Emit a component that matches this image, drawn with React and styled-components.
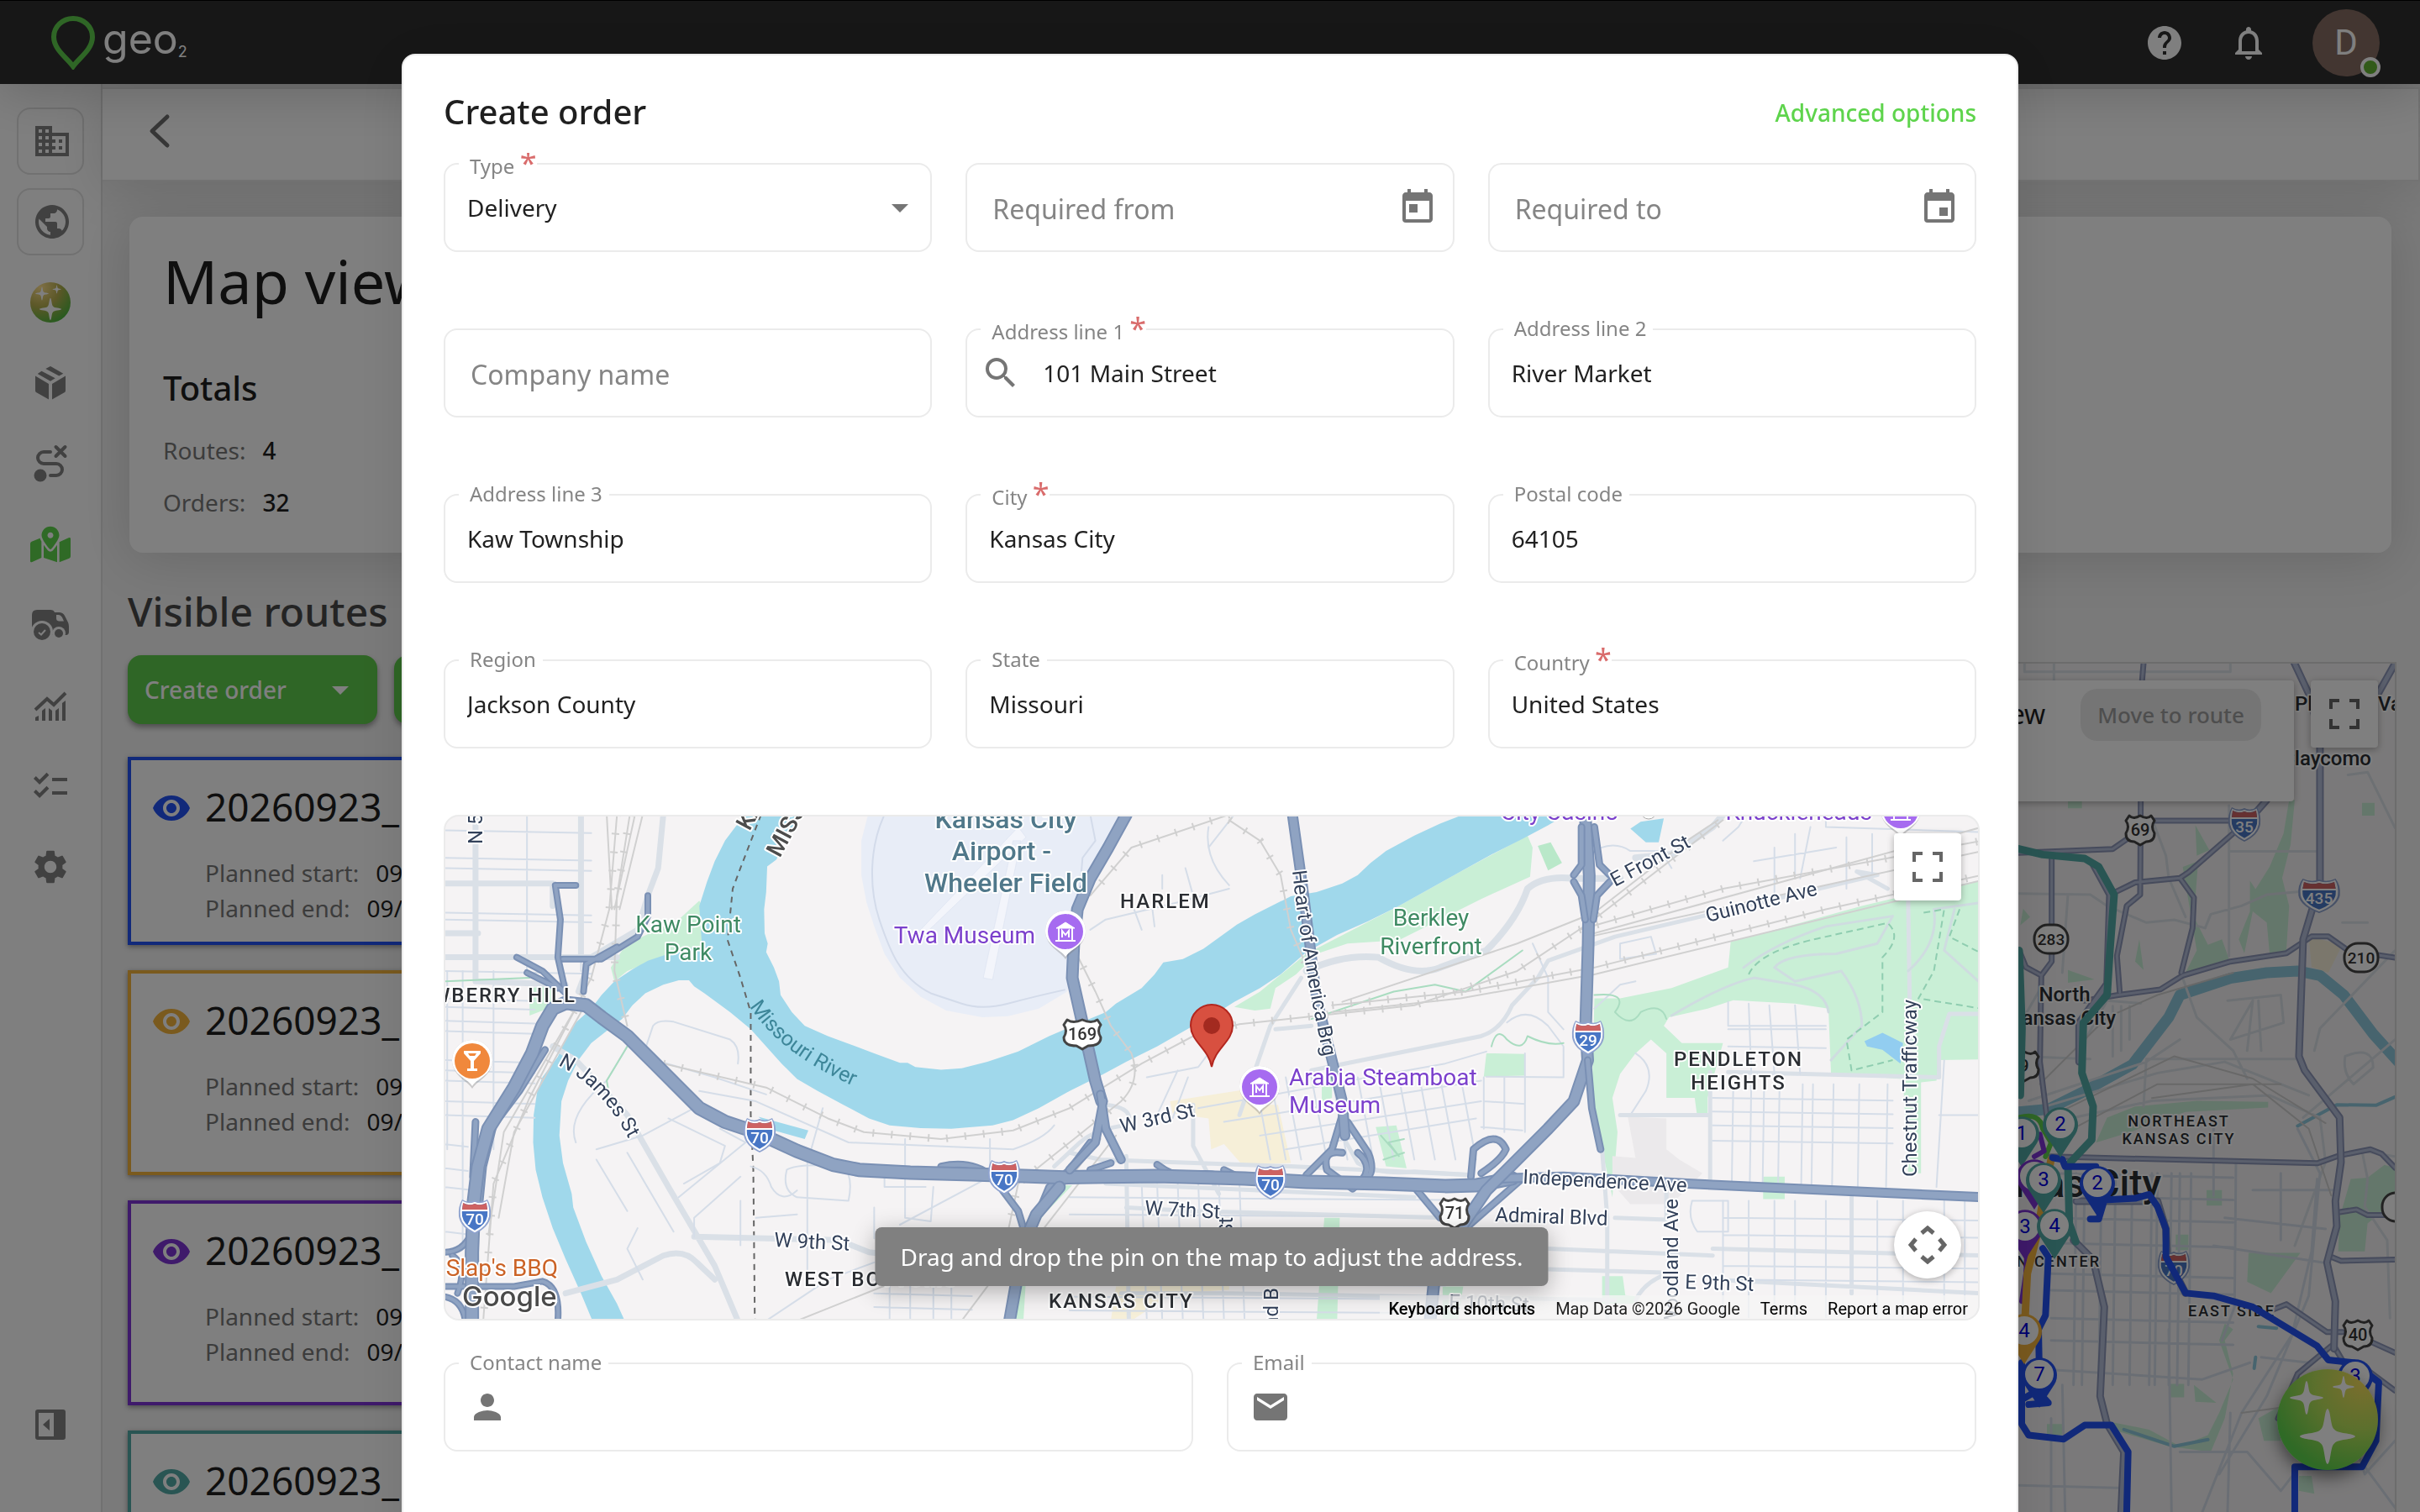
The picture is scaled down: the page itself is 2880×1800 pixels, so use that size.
import React from 'react';
import styled, { createGlobalStyle, css } from 'styled-components';
import {
	MdArrowDropDown, MdBusiness, MdChecklist, MdEvent, MdHelp, MdMail, MdNotificationsNone,
	MdPerson, MdPublic, MdRemoveRedEye, MdSearch, MdSettings, MdToday
} from 'react-icons/md';
import { FaMapMarkedAlt } from 'react-icons/fa';


const GlobalStyle = createGlobalStyle`
	*, *::after {
		box-sizing: border-box;
	}
	body {
		margin: 0;
		overflow: hidden;
		background: #f4f4f4;
		color: #1f1f1f;
		font-family: "Noto Sans", sans-serif;
		font-size: 28px;
	}
	button, input, select {
		font: inherit;
		color: inherit;
	}
	svg {
		display: block;
		flex-shrink: 0;
	}
`

/* ---------- shell ---------- */

const Shell = styled.div`
	display: flex;
	flex-direction: column;
	height: 100vh;
	overflow: hidden;
`
const Header = styled.header`
	display: flex;
	align-items: center;
	flex-shrink: 0;
	gap: 52px;
	height: 100px;
	padding: 0 48px 0 60px;
	border-top: 1px solid #000;
	background: #2e2e2e;
	color: #fff;
	box-shadow: 0 8px 64px rgba(0, 0, 0, 0.2);
	z-index: 1;
`
const Logo = styled.a`
	display: flex;
	align-items: flex-start;
	gap: 8px;
	margin-right: auto;
	color: #fff;
	font-family: Inter, sans-serif;
	font-size: 50px;
	line-height: 54px;
	text-decoration: none;
	sub {
		font-size: 18px;
		line-height: 18px;
		vertical-align: -4px;
	}
`
const Tools = styled.div`
	display: flex;
	gap: 52px;
`
const IconButton = styled.button`
	display: grid;
	place-items: center;
	width: 48px;
	height: 48px;
	padding: 0;
	border: 0;
	background: none;
`
const Avatar = styled.button`
	position: relative;
	width: 80px;
	height: 80px;
	border: 0;
	border-radius: 50%;
	background: #866c62;
	color: #fff;
	font-family: Roboto, sans-serif;
	font-size: 42px;
	&::after {
		content: '';
		position: absolute;
		right: -1px;
		bottom: -1px;
		width: 24px;
		height: 24px;
		border: 4px solid #fff;
		border-radius: 50%;
		background: #64b432;
	}
`
const Body = styled.div`
	display: flex;
	flex: 1;
	min-height: 0;
`
const Sidebar = styled.nav`
	display: flex;
	flex-direction: column;
	align-items: center;
	gap: 16px;
	width: 122px;
	flex-shrink: 0;
	padding: 28px 0 64px;
	border-right: 2px solid #e2e2e2;
	background: #fff;
`
const NavItem = styled.a`
	display: grid;
	place-items: center;
	width: 80px;
	height: 80px;
	border: 2px solid ${p => p.$boxed ? '#e2e2e2' : 'transparent'};
	border-radius: 16px;
	color: ${p => p.$active ? '#5fd44c' : '#828282'};
	${p => p.$boxed && css`padding-left: 4px;`}
	${p => p.$last && css`margin-top: auto;`}
`
const Main = styled.main`
	flex: 1;
	min-width: 0;
`
const Toolbar = styled.div`
	display: flex;
	align-items: center;
	height: 112px;
	margin-top: 4px;
	padding: 0 44px 8px;
	border: 2px solid #e6e6e6;
	border-left: 0;
	background: #fff;
	box-shadow: 0 8px 64px rgba(0, 0, 0, 0.12);
`
const Content = styled.div`
	padding: 42px 28px 0 30px;
`
const Card = styled.section`
	height: 400px;
	margin: 0 6px 38px 2px;
	padding: 27px 40px;
	border-radius: 16px;
	background: #fff;
	box-shadow: 0 8px 64px rgba(0, 0, 0, 0.14);
`
const PageTitle = styled.h1`
	margin: 0 0 52px;
	font-size: 72px;
	font-weight: 400;
	line-height: 98px;
`
const CardTitle = styled.h2`
	margin: 0 0 28px;
	font-size: 40px;
	font-weight: 500;
	line-height: 54px;
`
const Stats = styled.dl`
	display: grid;
	grid-template-columns: max-content 1fr;
	gap: 24px 20px;
	margin: 0;
	line-height: 38px;
`
const Term = styled.dt`
	color: #787878;
`
const Value = styled.dd`
	margin: 0;
	font-weight: ${p => p.$strong ? 500 : 400};
`
const SectionTitle = styled.h2`
	margin: 0 0 20px;
	color: #484848;
	font-size: 48px;
	font-weight: 500;
	line-height: 64px;
`
const Split = styled.div`
	display: grid;
	grid-template-columns: 2fr 3fr;
	gap: 32px;
`
const Actions = styled.div`
	display: flex;
	gap: 20px;
	margin-bottom: 39px;
`
const GreenButton = styled.button`
	display: flex;
	align-items: center;
	justify-content: space-between;
	width: 297px;
	height: 82px;
	padding: 0 20px;
	border: 0;
	border-radius: 16px;
	background: #5fcd4c;
	box-shadow: 0 4px 6px rgba(0, 0, 0, 0.35);
	color: #fff;
	font-weight: 500;
`
const RouteList = styled.div`
	display: flex;
	flex-direction: column;
	gap: 30px;
`
const RouteCard = styled.article`
	display: flex;
	gap: 16px;
	height: ${p => p.$short ? 224 : 244}px;
	padding: 25px 24px;
	border: 4px solid ${p => p.$color};
	background: #fff;
	box-shadow: 0 2px 6px rgba(0, 0, 0, 0.4);
	svg {
		margin-top: 8px;
		color: ${p => p.$color};
	}
`
const RouteName = styled.h3`
	margin: 0 0 28px;
	font-size: 46px;
	font-weight: 400;
	line-height: 60px;
`
const Planned = styled.p`
	display: flex;
	gap: 20px;
	margin: 0;
	line-height: 42px;
	span {
		color: #787878;
	}
`

/* ---------- overview map ---------- */

const OverviewMap = styled.div`
	position: relative;
	height: 1100px;
	margin-top: 8px;
	border: 2px solid #d8d8d8;
	overflow: hidden;
	background: #f5f3f4;
`
const MapFill = styled.svg`
	position: absolute;
	top: 0;
	right: 0;
	width: ${p => p.$width};
	height: 100%;
`
const MapPanel = styled.div`
	position: absolute;
	top: 20px;
	right: 120px;
	display: flex;
	align-items: flex-start;
	justify-content: flex-end;
	gap: 42px;
	width: 900px;
	height: 144px;
	padding: 10px 39px;
	border-radius: 4px;
	background: #fff;
	box-shadow: 0 2px 8px rgba(0, 0, 0, 0.3);
	font-size: 32px;
	line-height: 60px;
`
const MoveButton = styled.button`
	height: 62px;
	padding: 0 20px;
	border: 0;
	border-radius: 20px;
	background: #ebebeb;
	color: #9c9c9c;
	font-size: 26px;
	font-weight: 500;
`
const MapButton = styled.button`
	position: absolute;
	right: 20px;
	display: grid;
	place-items: center;
	width: 80px;
	height: 80px;
	padding: 0;
	border: 0;
	border-radius: ${p => p.$round ? '50%' : '4px'};
	background: #fff;
	box-shadow: 0 2px 8px rgba(0, 0, 0, 0.3);
	${p => p.$round ? css`bottom: 48px;` : css`top: 20px;`}
`
const AssistantButton = styled.button`
	position: fixed;
	right: 50px;
	bottom: 50px;
	padding: 0;
	border: 0;
	border-radius: 50%;
	background: none;
	box-shadow: 0 8px 20px rgba(0, 0, 0, 0.5);
`

/* ---------- dialog ---------- */

const Backdrop = styled.div`
	position: fixed;
	inset: 0;
	z-index: 10;
	display: flex;
	justify-content: center;
	align-items: flex-start;
	padding: 64px 32px 0;
	overflow: hidden;
	background: rgba(0, 0, 0, 0.5);
`
const Dialog = styled.form`
	flex: 0 1 1924px;
	min-height: 100vh;
	padding: 0 48px 64px;
	border: 2px solid #ececec;
	border-radius: 16px;
	background: #fff;
	box-shadow: 0 8px 64px rgba(0, 0, 0, 0.1);
`
const DialogHead = styled.div`
	display: flex;
	align-items: center;
	justify-content: space-between;
	height: 116px;
	padding-top: 18px;
`
const DialogTitle = styled.h2`
	margin: 0;
	font-size: 40px;
	font-weight: 500;
	line-height: 54px;
`
const LinkButton = styled.button`
	padding: 2px 0 0;
	border: 0;
	background: none;
	color: #5ed44c;
	font-weight: 500;
`
const DialogBody = styled.div`
	margin-right: -4px;
	padding: 12px 4px 0 0;
	overflow: hidden;
`
const FieldGrid = styled.div`
	display: grid;
	grid-template-columns: repeat(${p => p.$columns}, 1fr);
	gap: 91px 40px;
`
const FieldBox = styled.div`
	position: relative;
	display: flex;
	align-items: center;
	height: 106px;
	padding-right: ${p => p.$select ? 12 : 18}px;
	border: 2px solid #ebebeb;
	border-radius: 16px;
	color: #757575;
`
const FieldLabel = styled.label`
	position: absolute;
	color: #858585;
	white-space: nowrap;
	${p => p.$resting ? css`
		left: 30px;
		top: 0;
		font-size: 32px;
		line-height: 106px;
	` : css`
		left: 16px;
		top: -18px;
		padding: 0 ${p.$required ? 0 : 8}px 0 13px;
		background: #fff;
		font-size: 24px;
		line-height: 32px;
	`}
`
const Asterisk = styled.span`
	color: #d96c6c;
	font-size: 36px;
`
const control = css`
	flex: 1;
	min-width: 0;
	height: 100%;
	padding: 0 0 0 26px;
	border: 0;
	outline: 0;
	background: none;
	color: #212121;
	appearance: none;
`
const Input = styled.input`
	${control}
`
const Select = styled.select`
	${control}
`
const LeadIcon = styled.span`
	margin-left: ${p => p.$wide ? 26 : 16}px;
`
const AddressMap = styled.div`
	position: relative;
	height: 602px;
	margin: 79px -4px 50px 0;
	border: 2px solid #ebebeb;
	border-radius: 18px;
	overflow: hidden;
	background: #f5f3f4;
`
const MapHint = styled.p`
	position: absolute;
	left: 50%;
	bottom: 39px;
	margin: 0;
	padding: 0 30px;
	border-radius: 8px;
	background: #808080;
	box-shadow: 0 6px 28px rgba(0, 0, 0, 0.3);
	color: #fff;
	font-size: 28px;
	line-height: 70px;
	white-space: nowrap;
	transform: translateX(-50%);
`
const MapCredits = styled.div`
	position: absolute;
	right: 0;
	bottom: 0;
	display: flex;
	gap: 24px;
	padding: 4px 12px 0 10px;
	background: rgba(245, 245, 245, 0.75);
	font-family: Roboto, sans-serif;
	font-size: 20px;
	line-height: 24px;
	a, button {
		padding: 0;
		border: 0;
		background: none;
		color: #000;
		text-decoration: none;
	}
	button {
		font-weight: 500;
	}
`

/* Map strokes are drawn in survey units, so widths are kept in screen pixels. */
const Line = styled.path`
	fill: none;
	stroke: ${p => p.$color || '#d7dee8'};
	stroke-width: ${p => p.$w || 3}px;
	stroke-linejoin: round;
	stroke-linecap: ${p => p.$dash ? 'butt' : 'round'};
	stroke-dasharray: ${p => p.$dash || 'none'};
	vector-effect: non-scaling-stroke;
`
const MapText = styled.text`
	fill: ${p => p.$color || '#33415a'};
	stroke: ${p => p.$halo === false ? 'none' : '#fff'};
	stroke-width: 4px;
	stroke-linejoin: round;
	paint-order: stroke;
	font-family: Roboto, sans-serif;
	font-size: ${p => p.$size || 24}px;
	font-weight: ${p => p.$weight || 400};
	letter-spacing: ${p => p.$caps ? '2px' : 'normal'};
	text-anchor: ${p => p.$anchor || 'start'};
`

const LIGHT = '#dae0e7'
const TINY = '#d5dde8'
const RAIL = '#d0d0d0'
const WATER = '#a0d8eb'
const PARK = '#c9efd6'
const INK = '#2b2e33'
const PURPLE = '#7b40cc'
const GREEN = '#3f8a63'

function Highway({ d, w = 12, edge = '#7a90b4', fill = '#8fa3c2' }) {
	return (
		<>
			<Line d={d} $color={edge} $w={w} />
			<Line d={d} $color={fill} $w={w - 4} />
		</>
	);
}

function Railway({ d }) {
	return (
		<>
			<Line d={d} $color={RAIL} $w={2} />
			<Line d={d} $color={RAIL} $w={9} $dash="2 20" />
		</>
	);
}

function Interstate({ x, y, n, s = 1 }) {
	return (
		<g transform={`translate(${x} ${y})`}>
			<g transform={`scale(${s} 1)`}>
				<path d="M-15 -20 Q-7 -15 0 -19 Q7 -15 15 -20 Q20 -12 19 0 Q17 13 0 21 Q-17 13 -19 0 Q-20 -12 -15 -20Z" fill="#8fa3cf" />
				<path d="M-14 -17 Q-7 -13 0 -16 Q7 -13 14 -17 Q17 -10 16 0 Q14 11 0 18 Q-14 11 -16 0 Q-17 -10 -14 -17Z" fill="#4876c5" stroke="#fff" strokeWidth="2" />
				<path d="M-14 -16 Q-7 -12 0 -15 Q7 -12 14 -16 L15 -8 H-15Z" fill="#cd6262" />
				<path d="M-16 -7H16" stroke="#fff" strokeWidth="2" />
			</g>
			<MapText y="10" $color="#fff" $halo={false} $size={19} $weight={500} $anchor="middle">{n}</MapText>
		</g>
	);
}

function UsRoute({ x, y, n, wide }) {
	const w = wide ? 22 : 17
	return (
		<g transform={`translate(${x} ${y})`}>
			<path
				d={`M${-w + 4} -17 Q${-w / 2} -12 0 -17 Q${w / 2} -12 ${w - 4} -17 L${w} -11 Q${w - 5} -4 ${w} 4 Q${w} 14 7 14 L0 18 L-7 14 Q${-w} 14 ${-w} 4 Q${-w + 5} -4 ${-w} -11Z`}
				fill="#fff" stroke="#444" strokeWidth="3" strokeLinejoin="round"
			/>
			<MapText y="7" $color="#333" $halo={false} $size={20} $weight={500} $anchor="middle">{n}</MapText>
		</g>
	);
}

function StateRoute({ x, y, n }) {
	return (
		<g transform={`translate(${x} ${y})`}>
			<rect x="-20" y="-17" width="40" height="34" rx="16" fill="#fff" stroke="#444" strokeWidth="3" />
			<MapText y="7" $color="#333" $halo={false} $size={19} $weight={500} $anchor="middle">{n}</MapText>
		</g>
	);
}

function Poi({ x, y, color, bar }) {
	return (
		<g transform={`translate(${x} ${y})`}>
			<path d="M0 33 C-5 24 -24 18 -24 -1 A24 24 0 0 1 24 -1 C24 18 5 24 0 33Z" fill="#777" opacity=".35" />
			<path d="M0 30 C-5 21 -24 17 -24 -1 A24 24 0 0 1 24 -1 C24 17 5 21 0 30Z" fill="#fff" />
			<circle r="21" fill={color} />
			{bar
				? <path d="M-10 -12H10V-9L2 0V9H6V12H-6V9H-2V0L-10 -9Z M-5 -9L-3 -6H3L5 -9Z" fill="#fff" fillRule="evenodd" />
				: (
					<g fill="none" stroke="#fff" strokeWidth="3">
						<path d="M-12 11H12M-8 10V-4M8 10V-4M-4 7V-1L0 4L4 -1V7" strokeWidth="2" />
						<path d="M-11 -4L0 -11L11 -4Z" fill="#fff" strokeWidth="1" />
					</g>
				)
			}
		</g>
	);
}

function streets(xs, top, bottom, ys, left, right, lean = 0) {
	return xs.map(x => `M${x} ${top}L${x + lean} ${bottom}`).join('')
		+ ys.map(y => `M${left} ${y}L${right} ${y + 8}`).join('');
}

function AddressDrawing() {
	return (
		<MapFill $width="100%" viewBox="530 972 1824 598" preserveAspectRatio="xMinYMid slice" aria-label="Map of Kansas City">
			<g transform="translate(520 960) scale(.6122 .4082)">
				{/* parks, airfield, districts */}
				<path fill={PARK} d="M510 275L520 300L515 410L450 430L370 480L345 510L338 470L360 420L400 380L470 330ZM180 530L240 520L215 590L180 610ZM1235 1105L1180 1190L1150 1260L1140 1500L1125 1500L1150 1240L1190 1150L1215 1105Z" />
				<path fill={PARK} d="M2120 85L2130 120L2125 205L2030 270L1950 330L1870 390L1770 400L1710 430L1670 490L1630 530L1620 590L1590 595L1550 585L1600 540L1690 430L1870 290L1990 190Z" />
				<path fill="#b9e8c9" d="M2140 115L2165 105L2187 165L2160 187Z" />
				<path fill={PARK} d="M3004 215V738L2920 740L2915 800L2885 805V1070H2860L2850 795L2710 780L2705 590L2640 575L2520 565L2470 590L2395 615L2385 640L2420 690L2500 690L2470 850V905H2450L2445 850H2390V720L2360 680L2330 720L2300 780L2285 850L2295 950L2285 1140L2265 1000L2245 850L2250 560L2300 560L2400 530L2510 470L2515 395L2650 340L2770 290L2870 255Z" />
				<path fill={PARK} d="M2040 720L2115 722V785L2035 788ZM1825 935L1865 930L1885 1055L1845 1050ZM1500 870L1530 865L1545 905L1505 920ZM2578 1080H2620V1145H2578ZM2265 1370H2305L2310 1425L2335 1430L2325 1450H2265ZM1725 1200H1755L1750 1500H1710ZM1955 1400H1995L1985 1500H1955ZM1720 800L1740 790V850L1720 860Z" />
				<path fill="#f6efd8" d="M1425 860L1575 825L1580 870L1635 870L1660 1040L1565 1045L1530 985L1505 1000L1500 910L1430 895ZM1320 1400L1540 1380V1410L1430 1420L1350 1500H1310Z" />
				<path fill="#ebe9eb" d="M2315 905L2390 910V1000L2415 1030L2460 1070L2400 1160H2320L2285 1100V1020L2330 1025Z" />
				<path fill="#e8edf7" d="M838 24L825 100L825 200L835 280L850 350L870 430L900 500L940 555L990 595L1060 615L1110 612L1170 590L1225 540L1240 450L1250 330L1290 180L1340 24Z" />
				<Line $color="#d3dbea" $w={2} d="M870 24C840 120 840 240 860 330S900 500 960 545L1020 575Q1060 595 1110 575T1220 535M1270 24L1280 100L1255 150L1250 240" />
				<path fill="#f3f5fb" stroke="#d8dfef" d="M1130 60L940 360L950 370L1145 90ZM1120 100L1135 100L1080 505L1062 500Z" />

				{/* rivers */}
				<path fill={WATER} d="M600 24L580 60L560 100L540 160L525 220L510 290L515 405L450 430L410 450L380 475L345 510L320 550L300 590L270 630L250 680L235 730L205 790L195 830L188 900L187 980L192 1060L205 1140L225 1230L250 1320L280 1420L305 1510H368L350 1450L320 1370L290 1270L265 1170L262 1130L245 1040L238 960L242 860L255 800L275 740L300 690L330 655L360 620L380 580L405 545L440 520L470 507H490L500 525L520 545L570 600L610 650L640 700L670 750L700 795L740 830L790 870L840 910L880 930L940 938L1000 940L1080 930L1120 915L1170 880L1230 830L1290 785L1340 745L1400 700L1470 640L1510 608L1550 570L1600 530L1640 490L1690 425L1750 375L1810 335L1870 290L1930 240L1990 190L2050 140L2110 95L2160 55L2195 24H1995L1950 50L1900 85L1845 130L1815 165L1790 200L1760 225L1710 250L1660 262L1590 315L1555 345L1490 415L1450 445L1412 455L1395 490L1370 530L1320 575L1300 600L1260 625L1190 670L1130 715L1070 745L1020 764L980 768L930 760L915 748H900L850 720L800 692L760 670L715 640L690 600L668 550L665 510L655 470L640 425L643 400L637 370L636 300L640 250L642 175L660 155L680 90L705 24Z" />
				<path fill={WATER} d="M2320 65L2340 45L2385 35L2375 105H2350ZM625 905L722 945L715 970L655 945Z" />
				<path fill="#92cdf0" d="M2775 685L2810 660L2850 690L2845 750L2810 710L2780 700Z" />
				<Line $color="#666" $w={2} $dash="7 6" d="M630 24L590 180L575 240L565 390L590 500L610 600V900L615 1060L618 1510" />

				{/* streets */}
				<Line d={streets([20, 50, 110], 480, 1000, [560, 585, 625, 655, 740, 770, 800, 860, 900], 15, 190)} $color={TINY} $w={2} />
				<Line d={streets([75, 175, 280], 24, 480, [70, 150, 180, 310, 330, 480], 15, 300)} $color={TINY} $w={2} />
				<Line d="M75 24V510M15 225H225L225 290M15 370H80M15 440H350M75 510L250 520M280 24V440" $color={LIGHT} $w={7} />
				<Line d={streets([15, 50], 980, 1280, [985, 1055, 1110, 1240], 15, 60)} $color={TINY} $w={2} />
				<Line d="M440 24L430 180L410 260L390 360L300 440L275 540M225 700L270 740L370 900L450 1110L540 1340L585 1500M250 1420L350 1380L440 1310Q480 1290 505 1330L540 1380M500 1255L780 1265L840 1300L900 1310" $color={LIGHT} $w={7} />
				<Line d="M420 640Q430 620 460 628L570 680Q590 700 585 750M420 640L400 730L540 790L640 840M510 830L620 860L800 980L1120 1000Q1180 970 1200 930M310 1000L400 960L500 880M310 1030L370 1180M370 1010L460 1240M270 980Q250 900 330 800L370 700M450 910L560 990L550 1040L480 1100M550 940L600 980L470 1140M390 1230L370 1290L400 1380M590 1080L500 1200V1255M610 1050Q640 1060 650 1110Q670 1160 700 1120M680 1060Q700 1040 790 1050Q810 1080 800 1150L700 1140Q670 1120 680 1060M720 1040V1350M750 880L720 1040M850 1170V1260M870 1050V1110H950M910 970V1200L960 1210L965 1110M1075 970V1080L900 1220M640 1500L760 1380L850 1330M590 1150V1280M620 1200L700 1190" $color={TINY} $w={2} />
				<Line d={streets([880, 920, 965, 1000], 1350, 1500, [1380, 1420, 1460], 850, 1040)} $color={TINY} $w={2} />
				<Line d="M1500 60Q1490 150 1540 230M1550 24L1500 120M1270 360L1300 330L1440 280L1540 240M1455 180L1470 260M1410 200V240M1355 300L1370 360M1390 290L1395 350" $color={TINY} $w={2} />
				<Line d={streets([1370, 1400, 1440, 1480, 1520, 1560], 1100, 1500, [1140, 1190, 1240, 1310, 1390, 1430, 1470], 1230, 1960, 10)} $color={TINY} $w={2} />
				<Line d="M1230 1010L1290 1030L1660 1050L2010 1075M1300 870Q1360 880 1340 930Q1280 940 1250 980L1200 1050M1340 1020L1345 1500M1340 1170L1470 1180L1960 1200M1330 1420H1530L2290 1440M1470 870V990L1520 1130M1300 1100L1900 1140" $color={LIGHT} $w={5} />
				<Line d={streets([1590, 1620, 1650, 1700, 1740, 1790, 1830, 1870, 1910, 1950, 1990], 790, 1030, [], 0, 0, 30)} $color={TINY} $w={2} />
				<Line d="M1480 880L1960 750L2040 715M1530 920L2030 800M1600 960L2030 860M1650 1000L2020 910M2035 790V940M2075 790V950M2115 720V950M2035 860L2115 868M2030 935L2110 945M1380 790L1480 760L1510 700M1400 900L1440 770M1430 910L1460 790" $color={TINY} $w={2} />
				<Line d="M1560 900L1620 640L1680 500M1630 650L1700 640M1700 770L2030 670Q2070 650 2090 580L2140 500L2160 450L2290 380L2800 200L2760 190L2820 240M1760 960L1790 1040Q1830 1075 1900 1065L2010 1075" $color={LIGHT} $w={5} />
				<Line d="M1690 480Q1760 430 1830 440Q1900 500 1950 470L2040 420Q2100 330 2120 240Q2150 200 2210 210H2300M2330 150L2400 140L2480 60L2500 24" $color={LIGHT} $w={8} />
				<Line d="M2230 150Q2280 90 2320 130L2380 130L2400 180M2500 100L2530 60L2545 24M2700 24V60L2998 75M2640 80V200M2600 120V260M2560 160L2720 120M2670 60L2650 210M2740 90V240M2790 80V200M2300 400L2360 380L2370 430L2300 445ZM2250 590L2300 520L2330 510M2130 400L2160 500V600L2190 650M2080 630Q2120 580 2160 640L2190 700V790L2040 788M2330 720Q2370 760 2350 830L2320 900" $color={TINY} $w={2} />
				<Line d="M2860 270L2865 780M2510 775L2920 790M2920 790V700L2940 605H3004M2475 775V1100M2475 900H2300M2265 1000L2275 1200V1500M2290 1200L2390 1205M2390 1100V1200M2480 1380L3004 1420M2480 1290L3004 1310M2160 1290L2480 1310M2160 1350L2400 1360Q2350 1380 2330 1440M2750 1140V1420" $color={LIGHT} $w={5} />
				<Line d={streets([2520, 2555, 2580, 2610, 2655, 2675, 2715, 2765, 2820], 810, 1110, [850, 890, 930, 975], 2480, 2830, -3)} $color={TINY} $w={2} />
				<Line d={streets([2500, 2550, 2600, 2640, 2700, 2800, 2850, 2930, 2970], 1150, 1490, [1200, 1250, 1340, 1380], 2500, 3004)} $color={TINY} $w={2} />
				<Line d="M2510 570V640H2700M2550 575L2555 780M2590 580L2600 780M2640 580L2650 780M2510 650H2700M2510 700L2700 705M2930 740L2915 1110M2920 900H3004M2440 1150Q2430 1200 2450 1240H2510V1150Z" $color={TINY} $w={2} />
				<Line d="M2540 470Q2600 400 2700 350L2830 320L2800 400L2720 430Q2620 430 2600 470L2640 510L2730 480Q2770 560 2770 640L2710 740M2400 610Q2500 520 2560 500L2640 520Q2700 540 2705 600M2860 480Q2920 400 2910 300L3004 280M2950 300L2930 420L3004 520" $color="#cfdce0" $w={3} />
				<Line d="M2550 490Q2570 420 2700 380L2820 340Q2850 380 2810 440V600L2740 680L2750 770L2830 740M2890 310L2930 300L2910 480L2880 560L3004 590M2960 300L2940 380L3004 430" $color="#8fcdb0" $w={2} $dash="8 5" />
				<Line d="M2050 700Q2060 640 2080 680Q2110 720 2120 670Q2160 700 2190 690M2250 550Q2320 540 2290 600Q2320 650 2340 600Q2380 570 2390 620M1700 620L1860 540L1940 520L2000 540L2110 420M1835 960L1870 1020L1850 980L1880 970M1840 1030L1880 1010M340 880L330 800L370 700M15 510L180 500" $color="#a9dcc0" $w={2} />

				{/* railways */}
				<Railway d="M350 24L335 300L300 500L180 850L110 1100L90 1500" />
				<Railway d="M375 24L350 260L345 480L370 640" />
				<Line d="M400 24L355 300M385 24L345 300M280 600L150 950L120 1200M265 600L130 950L100 1250M330 24L340 300" $color={RAIL} $w={2} />
				<Railway d="M440 750L640 820L760 910L830 950L980 970L1120 945L1230 880L1370 750L1470 670L1560 635L1900 580L2100 480L2240 340L2500 40" />
				<Railway d="M1240 420L1280 540L1310 640L1350 720Q1370 800 1330 860L1130 1100L1110 1240" />
				<Railway d="M1540 24L1350 120L1270 260" />
				<Railway d="M1540 40L1600 100L1640 200L1660 360L1700 500" />
				<Railway d="M1740 580L2000 540L2250 470L2700 300L3004 200" />
				<Railway d="M2220 360L2500 240L3004 100" />
				<Line d="M1740 600L1990 560L2250 490L3004 215M1760 570L2100 400L2250 310L2430 100L2490 40M2240 380L3004 130M2250 370L3004 60M1180 1230L1320 960M1160 1220L1290 970M700 1500L900 1380M1020 1500L1120 1300" $color={RAIL} $w={2} />

				{/* freeways */}
				<Highway w={8} d="M230 230L240 330L235 440L250 540M230 230H270M155 440L205 480L250 545M175 485L235 530M245 445H320L390 380L410 320V260M285 540L290 460L350 410M15 1300Q50 1300 65 1250M15 1400L150 1400L205 1385Q240 1400 235 1500M30 1310Q60 1340 40 1420M15 1430Q50 1440 55 1500" />
				<Highway w={9} d="M210 710L160 830L110 930L90 1050L80 1200M75 920L70 1080" />
				<Highway w={9} d="M1270 980L1230 1060L1190 1110L1165 1200M1100 1120L1130 1180L1140 1230M980 1050Q1040 1030 1080 1080M1400 1045Q1430 1080 1460 1080Q1500 1060 1550 1090M1310 1040L1270 1060M1530 1060L1570 1090M1760 900L1740 1000L1690 1075M1770 920L1810 1010Q1830 1080 1790 1105M1760 1010Q1720 1000 1730 1060L1780 1115Q1830 1060 1790 1010M2010 1080L2015 1000Q2060 940 2078 1000Q2070 1030 2030 1070M1900 1110L1950 1200M2110 1085L2000 1230" />
				<Highway w={17} d="M68 1510L68 1300L72 1150L80 1050L100 940L150 820L185 720L205 640L225 590L250 573L290 580L320 615L370 670L420 745L470 820L510 880L560 920L620 950L700 1005L770 1045L820 1060L920 1068L1040 1073L1140 1078L1220 1082L1300 1080L1400 1078L1570 1085L1690 1095L1840 1100L1960 1107L2020 1105L2090 1085" />
				<Highway w={12} d="M2060 1085L2190 1080L2430 1100L3004 1140" />
				<Highway w={15} d="M1340 24L1305 120L1270 210L1245 300L1238 400L1235 500L1250 600L1265 700L1280 800L1292 860" />
				<Highway w={11} d="M1290 840L1300 940L1330 1030M1295 860L1280 980L1230 1060" />
				<Highway w={13} d="M1663 24L1685 260L1710 560L1740 740L1760 860L1765 960" />
				<Highway w={15} d="M2232 24L2240 200L2238 400L2233 640L2237 740L2210 860L2160 940L2100 1030L2040 1120L1990 1230L1945 1290L1930 1510" />
				<Highway w={9} d="M2237 740L2245 880L2262 1000M2225 60L2225 170L2210 200M2250 60L2260 170L2280 200M2210 220L2225 260L2232 330M2280 220L2255 260L2248 330" />
				<Highway w={15} d="M1210 1110L1165 1190L1145 1260L1125 1400L1112 1510" />
			</g>

			<Interstate x={904} y={1351} n="70" />
			<Interstate x={1195} y={1401} n="70" />
			<Interstate x={565} y={1448} n="70" />
			<Interstate x={1512} y={1407} n="70" />
			<Interstate x={1890} y={1235} n="29" />
			<UsRoute x={1288} y={1231} n="169" wide />
			<UsRoute x={1731} y={1444} n="71" />

			<g>
				<MapText x="1197" y="986" $size={32} $weight={500} $color="#50788a" $anchor="middle">Kansas City</MapText>
				<MapText x="1192" y="1024" $size={32} $weight={500} $color="#50788a" $anchor="middle">Airport -</MapText>
				<MapText x="1197" y="1062" $size={32} $weight={500} $color="#50788a" $anchor="middle">Wheeler Field</MapText>
				<MapText x="1333" y="1081" $weight={500} $caps $color={INK}>HARLEM</MapText>
				<MapText x="686" y="1193" $weight={500} $caps $color={INK} $anchor="end">STRAWBERRY HILL</MapText>
				<MapText x="934" y="1531" $weight={500} $caps $color={INK}>WEST BOTTOMS</MapText>
				<MapText x="1248" y="1557" $weight={500} $caps $color={INK}>KANSAS CITY</MapText>
				<MapText x="2069" y="1269" $weight={500} $caps $color={INK} $anchor="middle">PENDLETON</MapText>
				<MapText x="2069" y="1297" $weight={500} $caps $color={INK} $anchor="middle">HEIGHTS</MapText>
				<MapText x="1232" y="1123" $size={28} $color={PURPLE} $anchor="end">Twa Museum</MapText>
				<MapText x="1534" y="1292" $size={28} $color={PURPLE}>Arabia Steamboat</MapText>
				<MapText x="1534" y="1325" $size={28} $color={PURPLE}>Museum</MapText>
				<MapText x="1856" y="976" $size={28} $color={PURPLE} $anchor="middle">City Casino</MapText>
				<MapText x="2228" y="976" $size={28} $color={PURPLE} $anchor="end">Knuckleheads</MapText>
				<MapText x="819" y="1110" $size={28} $color={GREEN} $anchor="middle">Kaw Point</MapText>
				<MapText x="819" y="1143" $size={28} $color={GREEN} $anchor="middle">Park</MapText>
				<MapText x="1703" y="1102" $size={28} $color={GREEN} $anchor="middle">Berkley</MapText>
				<MapText x="1703" y="1136" $size={28} $color={GREEN} $anchor="middle">Riverfront</MapText>
				<MapText x="664" y="1519" $size={28} $color="#cb6225" $anchor="end">Slap's BBQ</MapText>
				<MapText transform="translate(574 1005) rotate(-90)">N 5th St</MapText>
				<MapText transform="translate(892 990) rotate(-62)" $size={28} $weight={500} $color="#4c4c4c">KANSAS</MapText>
				<MapText transform="translate(928 1022) rotate(-62)" $size={28} $weight={500} $color="#4c4c4c">MISSOURI</MapText>
				<MapText transform="translate(1335 1349) rotate(-13)">W 3rd St</MapText>
				<MapText transform="translate(1362 1446) rotate(3)">W 7th St</MapText>
				<MapText transform="translate(921 1484) rotate(3)">W 9th St</MapText>
				<MapText transform="translate(1812 1409) rotate(3)">Independence Ave</MapText>
				<MapText transform="translate(1779 1454) rotate(2)">Admiral Blvd</MapText>
				<MapText transform="translate(2005 1534) rotate(2)">E 9th St</MapText>
				<MapText transform="translate(1724 1558) rotate(2)">E 10th St</MapText>
				<MapText transform="translate(1922 1056) rotate(-28)">E Front St</MapText>
				<MapText transform="translate(2032 1098) rotate(-14)">Guinotte Ave</MapText>
				<MapText transform="translate(2281 1401) rotate(-90)">Chestnut Trafficway</MapText>
				<MapText transform="translate(1997 1427) rotate(-90)" $anchor="end">Woodland Ave</MapText>
				<MapText transform="translate(1521 1533) rotate(-90)" $anchor="end">Grand B</MapText>
				<MapText transform="translate(1467 1449) rotate(-90)" $anchor="end">Main St</MapText>
				<path id="bridge" d="M1538 1037Q1550 1150 1582 1290" fill="none" />
				<MapText><textPath href="#bridge">Heart of America Brg</textPath></MapText>
				<path id="james" d="M664 1268Q722 1296 756 1372" fill="none" />
				<MapText><textPath href="#james">N James St</textPath></MapText>
				<path id="missouri" d="M892 1198Q930 1258 1028 1298" fill="none" />
				<MapText $size={25} $color="#3d8699" $halo={false}><textPath href="#missouri">Missouri River</textPath></MapText>
			</g>

			<Poi x={1268} y={1109} color="#a66bf0" />
			<Poi x={1499} y={1294} color="#a66bf0" />
			<Poi x={2262} y={965} color="#a66bf0" />
			<Poi x={562} y={1263} color="#f0883c" bar />
			<circle cx="1962" cy="966" r="9" fill="#fff" stroke="#aaa" />
			<path d="M1442 1270C1438 1248 1417 1240 1417 1221A25 25 0 0 1 1467 1221C1467 1240 1446 1248 1442 1270Z" fill="#d85040" stroke="#b3261e" strokeWidth="2" />
			<circle cx="1442" cy="1221" r="10" fill="#a32a20" />
			<text x="550" y="1555" fontFamily="Inter, sans-serif" fontSize="33" fontWeight="500" fill="#4a4a4a" stroke="#fff" strokeWidth="4" paintOrder="stroke">Google</text>
		</MapFill>
	);
}

const PIN_COLORS = { teal: '#52aaa6', purple: '#7e34d6', blue: '#2252f5', orange: '#f5b43d' }

function StopPin({ x, y, n, color }) {
	return (
		<g transform={`translate(${x} ${y})`}>
			<path d="M0 40L-18 12A21 21 0 1 1 18 12Z" fill={PIN_COLORS[color]} />
			<circle r="17" fill="#fff" />
			<MapText y="8" $size={24} $color="#0000e0" $halo={false} $anchor="middle">{n}</MapText>
		</g>
	);
}

function OverviewDrawing() {
	return (
		<MapFill $width="1640px" viewBox="1209 790 1640 1096" preserveAspectRatio="xMaxYMin slice" aria-label="Routes map">
			<g transform="translate(2380 760) scale(.3333 .6633)">
				<path fill={PARK} d="M890 435L910 450L960 410L1010 350L1030 290H1050L1035 370L1005 430L1030 480L1020 560L960 565L950 510L900 490L870 565L850 540L890 490ZM695 335L745 380L700 390ZM650 410L705 400L690 500L740 550L790 540L815 575L660 600L700 560ZM1290 295H1335V318H1290ZM240 290H290V305H240ZM80 485L105 500L70 515ZM240 595L335 612L240 618ZM480 580L495 540L510 595ZM380 860L480 840L700 830L955 832V842L660 850L540 870L470 885L340 905ZM885 1103L1070 1103L965 1175L880 1155ZM735 990H790V1018H735ZM625 1070H670V1098H625ZM1210 1040L1250 970L1310 968L1370 945L1408 950V1010L1310 1050L1300 1100H1205ZM605 1338H655V1362H605ZM690 1340L770 1372L695 1370ZM380 1405L530 1420L640 1450L740 1430L780 1390L830 1330L780 1260L800 1230L830 1240L800 1260L830 1320L800 1400L750 1460L600 1450L400 1420ZM165 1410H220V1430H165ZM920 1400L990 1380L1000 1440H940ZM1065 1503H1110L1120 1535L1065 1530Z" />
				<path fill="#f6efd8" d="M1100 535L1220 550L1170 600L1110 590Z" />
				<Line $color="#8fc8dc" $w={13} d="M66 850L170 845L290 815L470 765L600 680L640 640L820 610L950 600L1060 597L1140 605L1225 640L1330 710L1420 760" />
				<Line $color="#8fc8dc" $w={4} d="M1060 875L1200 837L1340 838L1408 823M920 1235L985 1238M440 1420L620 1450L740 1438M910 1290L905 1310" />
				<Line $color={LIGHT} $w={3} d="M85 45V60L820 60M190 45V80M820 45V60M66 458L320 460L380 480L520 510L620 505L730 520L750 495L860 480L950 460L1060 455M545 330L590 390L600 430L660 500M815 300V570M820 382H1130M240 460L220 600M650 610L700 680L830 740L880 790M140 630L60 700M66 750L320 755M520 755L1060 755M520 755L510 840M100 830L520 760L640 720M160 840L560 780L800 760L1100 820M170 870L540 830L960 820L1140 860M280 740L380 650L500 655M400 660V750M430 660V740M460 660V720M810 650L1000 640L1010 690L820 720L900 650L880 740M920 650L930 740M1120 740L1140 700L1408 560M1220 510H1310M1240 245L1310 240L1408 340M1080 860L1408 720M1230 750Q1330 730 1330 770L1260 800Q1220 780 1230 750M1408 930L1290 920L1310 970L1300 1020L1380 1080L1390 1220M1140 860L1160 940L1050 1090" />
				<Line $color={TINY} $w={3} d={streets([270, 300, 360, 410, 470, 540, 560, 610, 640, 680], 960, 1340, [960, 1000, 1040, 1085, 1140, 1170, 1220, 1260], 180, 830, -10)} />
				<Line $color={TINY} $w={3} d="M760 860V1000M840 940L835 1200L790 1260M900 990H1190M800 1040L1160 1060M760 1090L1150 1120M1000 960V1080M220 1340L230 1568M180 1400V1568M600 1240L610 1568M820 1390L810 1568M66 1520L440 1525M640 1460H880L1000 1530L1200 1400M930 1290L1100 1300M100 1310L720 1330L890 1300M1130 970L1110 1100L1040 1250L860 1390L720 1568M1060 880L1140 960L1100 1180L950 1360L780 1500M1190 1320L1300 1500L1408 1440M1290 1480L1408 1560" />
				<Line $color={RAIL} $w={2} d="M170 860L620 750L900 790L1160 870M220 890L560 800L1000 800M540 825L900 800L1100 880L1180 1000M140 800L380 680L560 640L830 600M860 1390L1010 1380" />
				<Highway w={7} edge="#8d96b8" fill="#b5bed8" d="M510 45L505 75M500 290L498 460L450 480L415 570L425 635M66 385L400 378L480 350L500 327H830M182 395V580L145 605L90 590L66 560M145 605L140 760L165 860M410 455L480 438L640 430L690 465L685 520L645 600M830 350L670 420L640 430M300 650L420 640L570 630L650 605L820 580L1020 565L1110 535H1170L1240 560L1408 573M180 930L1130 942L1210 928L1320 917L1360 925L1408 950M1205 1030L1270 1025L1310 1035H1380M1180 1110L1215 1117L1408 1115M970 1205L1020 1195L1165 1245H1220M1320 1262L1408 1282M1180 1270L1060 1320L990 1400M1300 1310L1408 1350M1190 1270L1260 1330" />
				<Highway w={9} edge="#8d96b8" fill="#b5bed8" d="M1040 35L1110 110L1140 190V440L1080 540L1065 750L1085 775L1210 860L1215 940L1195 1010L1200 1055L1165 1120L1195 1190L1190 1275M1408 45L1330 115M950 290L880 330" />
				<Highway w={9} edge="#8d96b8" fill="#b5bed8" d="M260 1080L330 1115L370 1200L355 1360L380 1410L440 1460L430 1568M280 760V690L380 620L390 460L330 405M270 1010L560 1010L590 1060L595 1110L660 1175" />
			</g>
			<Interstate x={2670} y={981} n="35" />
			<Interstate x={2759} y={1066} n="435" s={1.3} />
			<Interstate x={2586} y={1509} n="70" />
			<UsRoute x={2546} y={988} n="69" />
			<UsRoute x={2408} y={1269} n="9" />
			<UsRoute x={2805} y={1589} n="40" />
			<StateRoute x={2440} y={1118} n="283" />
			<StateRoute x={2809} y={1140} n="210" />
			<StateRoute x={2854} y={1437} n="1" />
			<MapText x="2456" y="1192" $weight={500} $color={INK} $anchor="middle">North</MapText>
			<MapText x="2517" y="1220" $weight={500} $color={INK} $anchor="end">Kansas City</MapText>
			<MapText x="2821" y="911" $weight={500} $color={INK} $anchor="end">Claycomo</MapText>
			<MapText x="2730" y="846" $weight={500} $color={INK}>Pleasant</MapText>
			<MapText x="2829" y="846" $weight={500} $color={INK}>Valley</MapText>
			<MapText x="2592" y="1341" $size={18} $weight={500} $caps $color={INK} $anchor="middle">NORTHEAST</MapText>
			<MapText x="2592" y="1362" $size={18} $weight={500} $caps $color={INK} $anchor="middle">KANSAS CITY</MapText>
			<MapText x="2499" y="1508" $size={18} $weight={500} $caps $color={INK} $anchor="end">CROWN CENTER</MapText>
			<MapText x="2603" y="1567" $size={18} $weight={500} $caps $color={INK}>EAST SIDE</MapText>
			<MapText x="2571" y="1425" $size={46} $weight={500} $color={INK} $anchor="end">Kansas City</MapText>

			<g transform="translate(2380 760) scale(.3333 .6633)">
				<Line $color={PIN_COLORS.teal} $w={9} d="M40 375L150 388L300 395L350 410L405 460L390 560L380 640L295 690L290 780L330 840L325 900L240 945L245 1050L268 1083M66 560L76 700L70 820" />
				<Line $color="#5fcd4c" $w={6} d="M66 860Q140 850 150 880L180 905L160 930" />
				<Line $color={PIN_COLORS.purple} $w={6} d="M140 890L155 920L120 930M95 1090L90 1140L75 1190" />
				<Line $color={PIN_COLORS.orange} $w={9} d="M180 935L150 1010L130 1070L95 1140L85 1240" />
				<Line $color={PIN_COLORS.blue} $w={8} d="M185 932L220 935L230 948H340M320 1042H350L370 1008L480 1005L530 998L560 1020L590 1060V1110L660 1175L760 1180L900 1200L1130 1270L1170 1295L1260 1300L1350 1335L1340 1440L1290 1487H1050V1568M75 1300V1410L100 1430L225 1437L300 1412H395L455 1460L450 1568M150 1095L170 1110L160 1215L135 1240L138 1320M100 1375L170 1372L130 1350L80 1365" />
			</g>
			<StopPin x={2405} y={1349} n="1" color="teal" />
			<StopPin x={2451} y={1338} n="2" color="teal" />
			<StopPin x={2420} y={1400} n="" color="purple" />
			<StopPin x={2431} y={1404} n="3" color="teal" />
			<StopPin x={2409} y={1460} n="3" color="purple" />
			<StopPin x={2444} y={1459} n="4" color="teal" />
			<StopPin x={2495} y={1408} n="2" color="blue" />
			<StopPin x={2408} y={1584} n="4" color="orange" />
			<StopPin x={2426} y={1636} n="7" color="blue" />
			<StopPin x={2802} y={1638} n="3" color="blue" />
		</MapFill>
	);
}

/* ---------- icons ---------- */

const STAR = 'M0 -1C.12 -.95 .1 -.32 .25 -.25C.32 -.1 .95 -.12 1 0C.95 .12 .32 .1 .25 .25C.1 .32 .12 .95 0 1C-.12 .95 -.1 .32 -.25 .25C-.32 .1 -.95 .12 -1 0C-.95 -.12 -.32 -.1 -.25 -.25C-.1 -.32 -.12 -.95 0 -1Z'

function Assistant({ size, id, from, mid, to, cx }) {
	return (
		<svg width={size} height={size} viewBox="0 0 120 120">
			<defs>
				<radialGradient id={id} cx={cx} cy=".12" r=".95">
					<stop offset="0" stopColor={from} />
					<stop offset=".5" stopColor={mid} />
					<stop offset="1" stopColor={to} />
				</radialGradient>
			</defs>
			<circle cx="60" cy="60" r="60" fill={`url(#${id})`} />
			<path d={STAR} fill="#fff" transform="translate(60 80) scale(33)" />
			<path d={STAR} fill="#fff" transform="translate(35 34) scale(20)" />
			<path d={STAR} fill="#fff" transform="translate(79 21) scale(13)" />
		</svg>
	);
}

const icon = { width: 48, height: 48, viewBox: '0 0 48 48', fill: 'currentColor' }

const PackageIcon = () => (
	<svg {...icon}>
		<path d="M6 15.500L22 25V43.500L7 35Q6 34.500 6 33ZM42 15.500L26 25V43.500L41 35Q42 34.500 42 33ZM8.700 13L13.500 9.700L29.700 18.300L24 21.700ZM18.300 7L23 4.400Q24 3.800 25 4.400L39.300 12.700L34.300 15.400Z" />
	</svg>
)
const RouteIcon = () => (
	<svg {...icon}>
		<circle cx="12" cy="38" r="7.500" />
		<path d="M24 10H16A7 7 0 0 0 16 24H31A7 7 0 0 1 31 38H24M30.500 4L41.500 15M41.500 4L30.500 15" fill="none" stroke="currentColor" strokeWidth="4" strokeLinecap="round" />
	</svg>
)
const TruckIcon = () => (
	<svg {...icon}>
		<path d="M2 27V12Q2 6 8 6H24Q28 6 29 9H34Q39 9 41 13L45 21Q46 23 46 26V32Q46 36 42.500 36H4Z" />
		<path d="M31 12H34Q36 12 38 15L40 19.500H34Q31 19 31 16Z" fill="#fff" />
		<circle cx="14" cy="32" r="13" fill="#fff" />
		<circle cx="34" cy="34" r="8" fill="#fff" />
		<path d="M0 28H3V48H0ZM2 36.500H46V48H2Z" fill="#fff" />
		<circle cx="14" cy="32" r="10" />
		<circle cx="34" cy="34" r="5" />
		<path d="M10 33L13 35.500L18 30" fill="none" stroke="#fff" strokeWidth="2" />
	</svg>
)
const ChartIcon = () => (
	<svg {...icon}>
		<path d="M6 38L10 36V42H6ZM14 30L18 27V42H14ZM22 27L26 30V42H22ZM30 30L34 27V42H30ZM38 21L42 18V42H38Z" />
		<path d="M6 29L20 16L28 23L42 9" fill="none" stroke="currentColor" strokeWidth="4" />
	</svg>
)
const CollapseIcon = () => (
	<svg {...icon}>
		<path fillRule="evenodd" d="M9 6H39Q42 6 42 9V39Q42 42 39 42H9Q6 42 6 39V9Q6 6 9 6ZM10 10V38H28V10ZM23 17V31L15 24Z" />
	</svg>
)
const BackIcon = () => (
	<svg width="48" height="48" viewBox="0 0 48 48"><path d="M33 7L15 24L33 41" fill="none" stroke="#6e6e6e" strokeWidth="5" strokeLinecap="round" strokeLinejoin="round" /></svg>
)
const FullscreenIcon = () => (
	<svg width="36" height="36" viewBox="0 0 36 36"><path d="M2 12V2H12M24 2H34V12M34 24V34H24M12 34H2V24" fill="none" stroke="#666" strokeWidth="4" /></svg>
)
const PanIcon = () => (
	<svg width="46" height="46" viewBox="0 0 46 46"><path d="M16 9L23 3L30 9M16 37L23 43L30 37M9 16L3 23L9 30M37 16L43 23L37 30" fill="none" stroke="#666" strokeWidth="5" /></svg>
)

const NAV = [
	{ name: 'Company', icon: <MdBusiness size={48} />, boxed: true },
	{ name: 'Region', icon: <MdPublic size={48} />, boxed: true },
	{ name: 'Assistant', icon: <Assistant size={48} id="ai-nav" cx=".25" from="#ffe08c" mid="#b9b050" to="#4fb53e" /> },
	{ name: 'Orders', icon: <PackageIcon /> },
	{ name: 'Routes', icon: <RouteIcon /> },
	{ name: 'Map', icon: <FaMapMarkedAlt size={48} />, active: true },
	{ name: 'Fleet', icon: <TruckIcon /> },
	{ name: 'Reports', icon: <ChartIcon /> },
	{ name: 'Tasks', icon: <MdChecklist size={48} /> },
	{ name: 'Settings', icon: <MdSettings size={48} /> },
	{ name: 'Collapse', icon: <CollapseIcon />, last: true },
]

const ROUTES = [
	{ color: '#2252f5', short: true },
	{ color: '#f5b43d' },
	{ color: '#7e34d6' },
	{ color: '#52aaa6' },
]

function Field({ id, label, value, required, lead, wideLead, trail, resting, options }) {
	return (
		<FieldBox $select={!!options}>
			<FieldLabel htmlFor={id} $resting={resting} $required={required}>
				{label}{required && <> <Asterisk>*</Asterisk></>}
			</FieldLabel>
			{lead && <LeadIcon $wide={wideLead}>{lead}</LeadIcon>}
			{options
				? <Select id={id} defaultValue={value}>{options.map(o => <option key={o}>{o}</option>)}</Select>
				: <Input type="text" id={id} defaultValue={value} />
			}
			{trail}
		</FieldBox>
	);
}

function CreateOrder() {
	return (
		<Backdrop>
			<Dialog role="dialog" aria-labelledby="create-order">
				<DialogHead>
					<DialogTitle id="create-order">Create order</DialogTitle>
					<LinkButton type="button">Advanced options</LinkButton>
				</DialogHead>
				<DialogBody>
					<FieldGrid $columns={3}>
						<Field id="type" label="Type" required value="Delivery" options={['Delivery']} trail={<MdArrowDropDown size={48} />} />
						<Field id="from" label="Required from" resting trail={<MdToday size={48} />} />
						<Field id="to" label="Required to" resting trail={<MdEvent size={48} />} />
						<Field id="company" label="Company name" resting />
						<Field id="line1" label="Address line 1" required value="101 Main Street" lead={<MdSearch size={48} />} />
						<Field id="line2" label="Address line 2" value="River Market" />
						<Field id="line3" label="Address line 3" value="Kaw Township" />
						<Field id="city" label="City" required value="Kansas City" />
						<Field id="postal" label="Postal code" value="64105" />
						<Field id="region" label="Region" value="Jackson County" />
						<Field id="state" label="State" value="Missouri" />
						<Field id="country" label="Country" required value="United States" />
					</FieldGrid>
					<AddressMap>
						<AddressDrawing />
						<MapButton type="button" aria-label="Full screen"><FullscreenIcon /></MapButton>
						<MapButton type="button" aria-label="Pan the map" $round><PanIcon /></MapButton>
						<MapCredits>
							<button type="button">Keyboard shortcuts</button>
							<span>Map Data ©2026 Google</span>
							<a href="#terms">Terms</a>
							<a href="#report">Report a map error</a>
						</MapCredits>
						<MapHint>Drag and drop the pin on the map to adjust the address.</MapHint>
					</AddressMap>
					<FieldGrid $columns={2}>
						<Field id="contact" label="Contact name" lead={<MdPerson size={48} />} wideLead />
						<Field id="email" label="Email" lead={<MdMail size={48} />} wideLead />
					</FieldGrid>
				</DialogBody>
			</Dialog>
		</Backdrop>
	);
}

export default function App() {

	return (
		<>
			<GlobalStyle />
			<Shell>
				<Header>
					<Logo href="#home">
						<svg width="54" height="64" viewBox="0 0 54 64">
							<path d="M27 60C20 50 4 40 4 25A23 22 0 0 1 50 25C50 40 34 50 27 60Z" fill="none" stroke="#5fcd4c" strokeWidth="6" />
						</svg>
						<span>geo<sub>2</sub></span>
					</Logo>
					<Tools>
						<IconButton aria-label="Help"><MdHelp size={48} color="#fff" /></IconButton>
						<IconButton aria-label="Notifications"><MdNotificationsNone size={48} color="#fff" /></IconButton>
					</Tools>
					<Avatar>D</Avatar>
				</Header>
				<Body>
					<Sidebar>
						{NAV.map(
							(item) => (
								<NavItem key={item.name} href="#" aria-label={item.name} $boxed={item.boxed} $active={item.active} $last={item.last}>
									{item.icon}
								</NavItem>
							)
						)}
					</Sidebar>
					<Main>
						<Toolbar>
							<IconButton aria-label="Back"><BackIcon /></IconButton>
						</Toolbar>
						<Content>
							<Card>
								<PageTitle>Map view</PageTitle>
								<CardTitle>Totals</CardTitle>
								<Stats>
									<Term>Routes:</Term><Value $strong>4</Value>
									<Term>Orders:</Term><Value $strong>32</Value>
								</Stats>
							</Card>
							<SectionTitle>Visible routes</SectionTitle>
							<Split>
								<div>
									<Actions>
										<GreenButton>Create order<MdArrowDropDown size={48} /></GreenButton>
										<GreenButton>Actions<MdArrowDropDown size={48} /></GreenButton>
									</Actions>
									<RouteList>
										{ROUTES.map(
											(route, i) => (
												<RouteCard key={i} $color={route.color} $short={route.short}>
													<MdRemoveRedEye size={48} />
													<div>
														<RouteName>20260923_R{i + 1}</RouteName>
														<Planned><span>Planned start:</span>09/23/2026</Planned>
														<Planned><span>Planned end:</span>09/23/2026</Planned>
													</div>
												</RouteCard>
											)
										)}
									</RouteList>
								</div>
								<OverviewMap>
									<OverviewDrawing />
									<MapPanel>
										Map view
										<MoveButton disabled>Move to route</MoveButton>
									</MapPanel>
									<MapButton aria-label="Full screen"><FullscreenIcon /></MapButton>
								</OverviewMap>
							</Split>
						</Content>
					</Main>
				</Body>
			</Shell>
			<AssistantButton aria-label="Assistant">
				<Assistant size={120} id="ai-fab" cx=".85" from="#f6dc5a" mid="#b8e05a" to="#5fd44c" />
			</AssistantButton>
			<CreateOrder />
		</>
	);
}
